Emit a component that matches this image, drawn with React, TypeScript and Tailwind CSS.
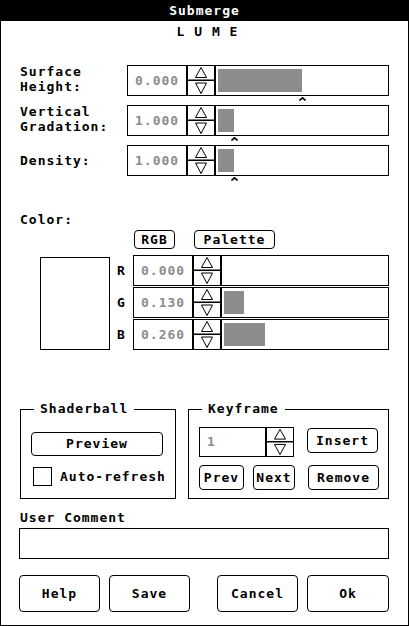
import React from "react";

function Spin() {
  return (
    <svg className="block w-full h-full" viewBox="0 0 26 29" preserveAspectRatio="none">
      <rect x="0" y="13.5" width="26" height="1.5" fill="#000" />
      <path d="M13 1.5 L18.5 11.5 L7.5 11.5 Z" fill="none" stroke="#000" strokeWidth="1" />
      <path d="M7.5 17 L18.5 17 L13 27.5 Z" fill="none" stroke="#000" strokeWidth="1" />
    </svg>
  );
}

function Caret({ left }: { left: number }) {
  return (
    <svg
      className="absolute top-[calc(100%+2px)]"
      style={{ left }}
      width="7"
      height="4"
      viewBox="0 0 7 4"
    >
      <path d="M0.5 3.5 L3.5 0.8 L6.5 3.5" fill="none" stroke="#000" strokeWidth="1.6" />
    </svg>
  );
}

function SliderBox({
  value,
  bar,
  caret,
  wide,
}: {
  value: string;
  bar: number;
  caret?: boolean;
  wide: boolean;
}) {
  return (
    <div className={`flex h-[31px] border border-black ${wide ? "w-[262px]" : "w-[256px]"}`}>
      <div className="w-[58px] flex items-center pl-[7px] text-[#8c8c8c]">{value}</div>
      <div className="w-[30px] border-x-2 border-black">
        <Spin />
      </div>
      <div className="relative flex-1 pl-[2px] py-[3px]">
        {bar > 0 && <div className="h-full bg-[#8c8c8c]" style={{ width: bar }} />}
        {caret && <Caret left={2 + bar - 3.5} />}
      </div>
    </div>
  );
}

function Row({ label, value, bar }: { label: string[]; value: string; bar: number }) {
  return (
    <div className="flex items-center">
      <div className={`w-[107px] leading-[15px] ${label.length > 1 ? "-mt-[4px]" : ""}`}>
        {label.map((l) => (
          <div key={l}>{l}</div>
        ))}
      </div>
      <SliderBox value={value} bar={bar} caret wide />
    </div>
  );
}

function Btn({ className, children }: { className: string; children: React.ReactNode }) {
  return (
    <div className={`border border-black rounded-[4px] flex items-center justify-center ${className}`}>
      {children}
    </div>
  );
}

export default function App() {
  return (
    <div className="w-[409px] h-[626px] bg-white flex flex-col font-['DejaVu_Sans_Mono',monospace] text-[13px] leading-[16px] tracking-[1px] font-bold text-black">
      <div className="h-[21px] shrink-0 bg-black text-white flex items-center justify-center">Submerge</div>
      <div className="flex-1 border-x border-b border-black px-[19px] pt-[3px] flex flex-col">
        <div className="text-center pl-[6px]">L U M E</div>

        <div className="mt-[25px] flex flex-col gap-[9px]">
          <Row label={["Surface", "Height:"]} value="0.000" bar={84} />
          <Row label={["Vertical", "Gradation:"]} value="1.000" bar={16} />
          <Row label={["Density:"]} value="1.000" bar={16} />
        </div>

        <div className="mt-[36px]">Color:</div>
        <div className="mt-[2px] ml-[114px] flex gap-[19px]">
          <Btn className="w-[41px] h-[19px]">RGB</Btn>
          <Btn className="w-[81px] h-[19px]">Palette</Btn>
        </div>
        <div className="mt-[6px] flex">
          <div className="ml-[20px] mt-[2px] w-[70px] h-[93px] border border-black" />
          <div className="w-[23px] flex flex-col gap-px">
            {["R", "G", "B"].map((c) => (
              <div key={c} className="h-[31px] flex items-center justify-center">
                {c}
              </div>
            ))}
          </div>
          <div className="flex flex-col gap-px">
            <SliderBox value="0.000" bar={0} wide={false} />
            <SliderBox value="0.130" bar={20} wide={false} />
            <SliderBox value="0.260" bar={41} wide={false} />
          </div>
        </div>

        <div className="mt-[51px] flex gap-[12px]">
          <fieldset className="w-[156px] h-[98px] border border-black">
            <legend className="ml-[13px] px-[6px]">Shaderball</legend>
            <Btn className="mt-[15px] mx-[10px] w-[132px] h-[24px]">Preview</Btn>
            <div className="mt-[11px] ml-[12px] flex items-center gap-[8px]">
              <div className="w-[19px] h-[19px] border border-black" />
              <span>Auto-refresh</span>
            </div>
          </fieldset>
          <fieldset className="w-[201px] h-[98px] border border-black">
            <legend className="ml-[13px] px-[6px]">Keyframe</legend>
            <div className="mt-[10px] ml-[10px] flex items-start">
              <div className="flex w-[95px] h-[30px] border border-black">
                <div className="w-[65px] flex items-center pl-[7px] text-[#8c8c8c]">1</div>
                <div className="w-[28px] border-l-2 border-black">
                  <Spin />
                </div>
              </div>
              <Btn className="ml-[13px] mt-px w-[71px] h-[25px]">Insert</Btn>
            </div>
            <div className="mt-[8px] ml-[10px] flex">
              <Btn className="w-[45px] h-[25px]">Prev</Btn>
              <Btn className="ml-[9px] w-[42px] h-[25px]">Next</Btn>
              <Btn className="ml-[13px] w-[71px] h-[25px]">Remove</Btn>
            </div>
          </fieldset>
        </div>

        <div className="mt-[11px]">User Comment</div>
        <div className="mt-[2px] -ml-px w-[370px] h-[31px] border border-black" />

        <div className="mt-[16px] -ml-px flex">
          <Btn className="w-[81px] h-[37px]">Help</Btn>
          <Btn className="ml-[9px] w-[81px] h-[37px]">Save</Btn>
          <Btn className="ml-[27px] w-[81px] h-[37px]">Cancel</Btn>
          <Btn className="ml-[9px] w-[82px] h-[37px]">Ok</Btn>
        </div>
      </div>
    </div>
  );
}
